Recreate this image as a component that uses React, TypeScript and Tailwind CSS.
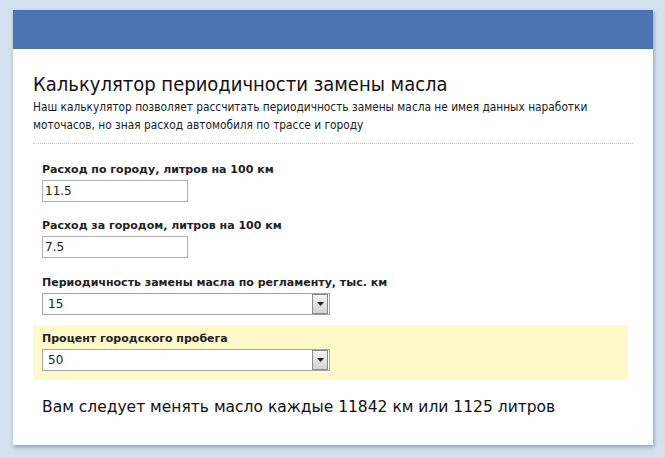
import React from "react";

function Arrow() {
  return (
    <div className="w-[16px] h-[20px] border border-[#8a8a8a] bg-gradient-to-b from-[#f4f4f4] to-[#d4d4d4] flex items-center justify-center">
      <svg width="7" height="4" viewBox="0 0 7 4"><path d="M0 0h7L3.5 4z" fill="#222" /></svg>
    </div>
  );
}

function Select({ value }: { value: string }) {
  return (
    <div className="w-[288px] h-[22px] border border-[#a5a5a5] bg-white flex items-center justify-between pl-[5px] pr-[1px] text-[12px] text-[#222]" style={{ fontFamily: "'DejaVu Sans', Verdana, sans-serif" }}>
      <span>{value}</span>
      <Arrow />
    </div>
  );
}

function Input({ value }: { value: string }) {
  return (
    <div className="w-[146px] h-[22px] border border-[#b0b0b0] bg-white flex items-center pl-[2px] text-[12px] text-[#222]" style={{ fontFamily: "'DejaVu Sans', Verdana, sans-serif" }}>
      {value}
    </div>
  );
}

function Label({ children }: { children: React.ReactNode }) {
  return (
    <div className="text-[11px] font-bold text-[#222] leading-[14px] mb-[3px]" style={{ fontFamily: "'DejaVu Sans', Verdana, sans-serif" }}>
      {children}
    </div>
  );
}

export default function App() {
  return (
    <div className="w-[665px] h-[458px] bg-[#d3e1ee] pt-[10px] pl-[13px]">
      <div className="w-[640px] h-[435px] bg-white shadow-[1px_2px_4px_rgba(60,80,110,0.45)]">
        <div className="h-[39px] bg-[#4b74b0]" />
        <div className="px-[20px]">
          <div className="mt-[22px] text-[20px] leading-[26px] text-[#111]" style={{ fontFamily: "'DejaVu Sans Condensed', 'DejaVu Sans', sans-serif", fontStretch: "condensed" }}>
            Калькулятор периодичности замены масла
          </div>
          <div className="mt-[1px] text-[11.8px] leading-[18px] text-[#1a1a1a]" style={{ fontFamily: "'DejaVu Sans Condensed', 'DejaVu Sans', sans-serif", fontStretch: "condensed" }}>
            Наш калькулятор позволяет рассчитать периодичность замены масла не имея данных наработки<br />
            моточасов, но зная расход автомобиля по трассе и городу
          </div>
          <div className="mt-[9px] border-t border-dotted border-[#c8c8c8] w-[600px]" />
          <div className="pl-[9px] pt-[19px]">
            <Label>Расход по городу, литров на 100 км</Label>
            <Input value="11.5" />
            <div className="h-[17px]" />
            <Label>Расход за городом, литров на 100 км</Label>
            <Input value="7.5" />
            <div className="h-[18px]" />
            <Label>Периодичность замены масла по регламенту, тыс. км</Label>
            <Select value="15" />
          </div>
          <div className="mt-[10px] w-[595px] h-[55px] bg-[#fff8c8] pl-[9px] pt-[7px]">
            <Label>Процент городского пробега</Label>
            <Select value="50" />
          </div>
          <div className="mt-[17px] pl-[9px] text-[15.5px] leading-[20px] text-[#111]" style={{ fontFamily: "'DejaVu Sans', Verdana, sans-serif" }}>
            Вам следует менять масло каждые 11842 км или 1125 литров
          </div>
        </div>
      </div>
    </div>
  );
}
